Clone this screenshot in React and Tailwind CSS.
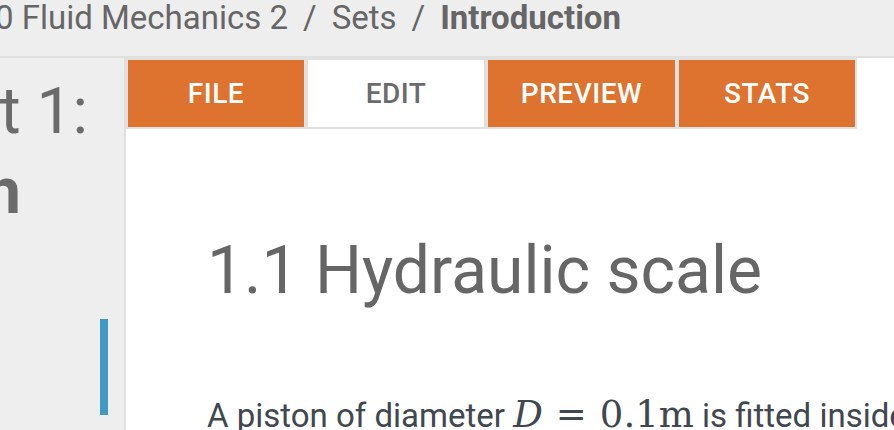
import React from 'react';

const tabs = [
  { label: 'FILE', w: 'w-[176px]', active: false },
  { label: 'EDIT', w: 'w-[176px]', active: true },
  { label: 'PREVIEW', w: 'w-[187px]', active: false },
  { label: 'STATS', w: 'w-[176px]', active: false },
];

export default function App() {
  return (
    <div className="w-[894px] h-[430px] overflow-hidden bg-white flex flex-col font-['Roboto',sans-serif]">
      {/* breadcrumb header */}
      <header className="h-[58px] shrink-0 bg-[#eeeeee] border-b-2 border-[#e0e0e0] overflow-hidden">
        <div className="flex items-start whitespace-nowrap text-[33px] leading-none text-[#666666] pt-[1px] ml-[-5px]">
          <span>0 Fluid Mechanics 2</span>
          <span className="mx-[15px]">/</span>
          <span>Sets</span>
          <span className="mx-[15px]">/</span>
          <span className="font-bold">Introduction</span>
        </div>
      </header>

      <div className="flex flex-1 min-h-0">
        {/* sidebar, heading runs off the left edge */}
        <aside className="w-[126px] shrink-0 bg-[#eeeeee] border-r-2 border-[#e0e0e0] overflow-hidden flex flex-col">
          <div className="mt-[14px] text-[64px] leading-[80px] text-[#6b6b6b] whitespace-nowrap">
            <div className="w-[88px] flex justify-end">
              <span>Part 1:</span>
            </div>
            <div className="w-[21px] flex justify-end font-bold">
              <span>Introduction</span>
            </div>
          </div>
          <div className="ml-[100px] mt-[87px] w-[8px] h-[96px] bg-[#4299c6]" />
        </aside>

        {/* main */}
        <main className="flex-1 flex flex-col min-w-0">
          <div className="w-[731px] h-[71px] shrink-0 bg-[#e0e0e0] p-[2px] flex gap-[4px]">
            {tabs.map((t) => (
              <div
                key={t.label}
                className={`${t.w} h-full flex items-center justify-center text-[28px] font-medium tracking-[0.5px] ${
                  t.active ? 'bg-white text-[#6b6b6b]' : 'bg-[#dd732e] text-white'
                }`}
              >
                {t.label}
              </div>
            ))}
          </div>

          <div className="pl-[81px] pt-[109px] whitespace-nowrap">
            <h1 className="text-[66px] leading-none text-[#666666]">1.1 Hydraulic scale</h1>
            <p className="mt-[92px] text-[33px] leading-none text-[#41474f] flex items-baseline">
              <span>A piston of diameter&nbsp;</span>
              <span className="font-['DejaVu_Serif',serif] text-[37px] leading-none flex items-baseline">
                <i>D</i>
                <span className="mx-[13px]">=</span>
                <span>0.1m</span>
              </span>
              <span>&nbsp;is fitted inside a cylinder</span>
            </p>
          </div>
        </main>
      </div>
    </div>
  );
}
